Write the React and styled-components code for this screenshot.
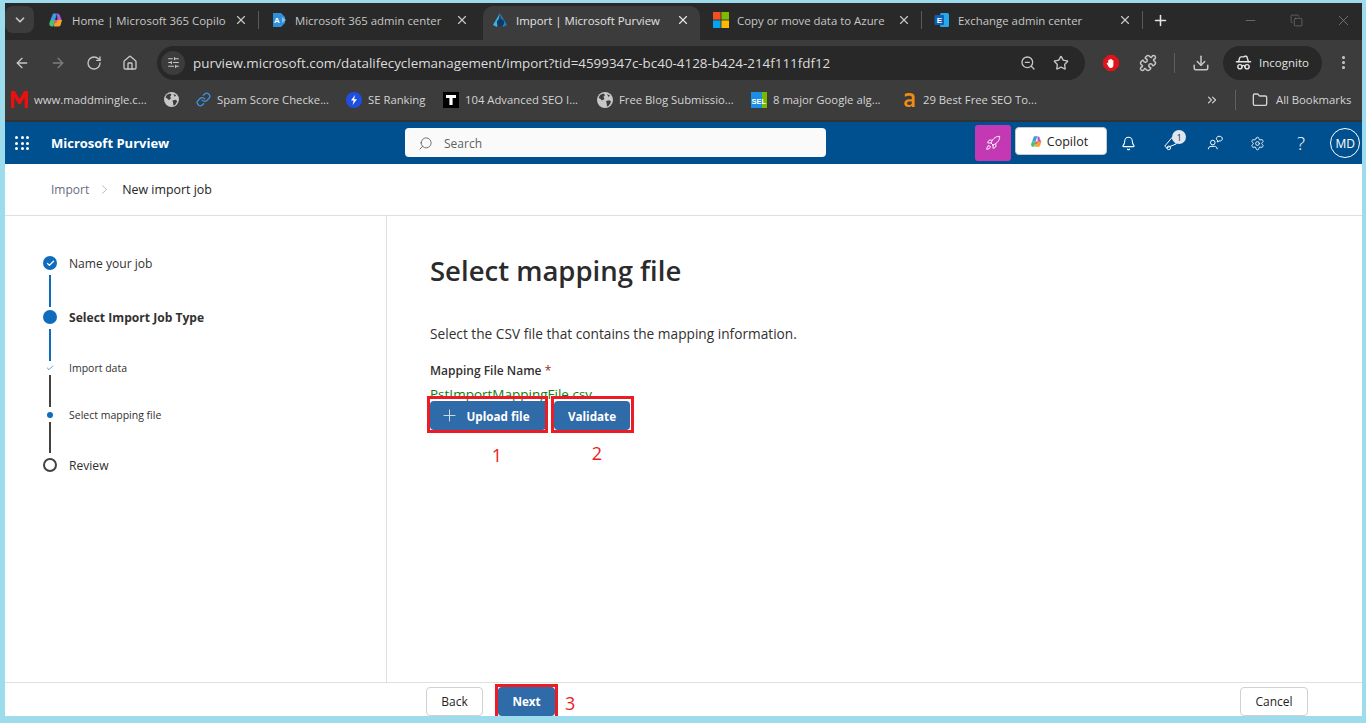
import styled, { createGlobalStyle } from 'styled-components';
import {
  ArrowLeft,
  ArrowRight,
  Bell,
  Check,
  ChevronDown,
  ChevronRight,
  ChevronsRight,
  Copy,
  Download,
  Folder,
  HatGlasses,
  House,
  Link,
  Minus,
  MoreVertical,
  Plus,
  Puzzle,
  RotateCw,
  Rocket,
  Search,
  Settings,
  SlidersHorizontal,
  Star,
  X,
  ZoomOut,
} from 'lucide-react';

const GlobalStyle = createGlobalStyle`
  html, body { margin: 0; padding: 0; }
  body { font-family: "Open Sans", "Noto Sans", "Liberation Sans", sans-serif; }
  * { box-sizing: border-box; }
`;

const Frame = styled.div`
  width: 1366px;
  height: 723px;
  overflow: hidden;
  background: #9cdcec;
  padding: 3px 4px 7px 5px;
  display: flex;
  flex-direction: column;
`;

const TabStrip = styled.div`
  height: 37px;
  flex: none;
  background: #292929;
  display: flex;
  align-items: flex-end;
  color: #c7c7c7;
  font-size: 12px;
`;

const TabMenu = styled.div`
  width: 29px;
  height: 27px;
  margin: 0 2px 7px 0;
  border-radius: 8px;
  background: #3c3c3c;
  display: flex;
  align-items: center;
  justify-content: center;
`;

const Tab = styled.div`
  width: ${(p) => (p.$active ? 217 : p.$wide ? 223 : 221)}px;
  height: 34px;
  flex: none;
  display: flex;
  align-items: center;
  margin: ${(p) => (p.$active ? '0 1px 0 3px' : '0')};
  padding: 0 ${(p) => (p.$active ? 10 : 11)}px 6px ${(p) => (p.$active ? 9 : 12)}px;
  border-radius: 10px 10px 0 0;
  background: ${(p) => (p.$active ? '#3c3c3c' : 'transparent')};
  color: ${(p) => (p.$active ? '#e3e3e3' : '#c7c7c7')};
  position: relative;
  &::after {
    content: '';
    display: ${(p) => (p.$rule ? 'block' : 'none')};
    position: absolute;
    right: 0;
    top: 5px;
    width: 1px;
    height: 18px;
    background: #5a5a5a;
  }
`;

const TabTitle = styled.span`
  flex: 1;
  min-width: 0;
  margin: 0 6px 0 8px;
  white-space: nowrap;
  font-size: 11.4px;
`;

const NewTab = styled.div`
  width: 35px;
  display: flex;
  justify-content: center;
  padding-bottom: 11px;
  color: #e3e3e3;
`;

const WindowControls = styled.div`
  margin-left: auto;
  display: flex;
  align-items: center;
  gap: 32px;
  padding: 0 10px 11px 0;
  color: #8b8b8b;
`;

const Toolbar = styled.div`
  height: 43px;
  flex: none;
  background: #3c3c3c;
  display: flex;
  align-items: center;
  color: #c7c7c7;
  padding: 2px 0 0 9px;
`;

const NavGroup = styled.div`
  display: flex;
  gap: 20px;
  align-items: center;
`;

const Omnibox = styled.div`
  width: 928px;
  height: 34px;
  margin-left: 19px;
  border-radius: 17px;
  background: #282828;
  display: flex;
  align-items: center;
  padding: 0 16px 0 4px;
`;

const TuneBadge = styled.div`
  width: 24px;
  height: 24px;
  border-radius: 50%;
  background: #3c3c3c;
  display: flex;
  align-items: center;
  justify-content: center;
`;

const Url = styled.span`
  flex: 1;
  margin-left: 8px;
  font-size: 13.4px;
  color: #dcdcdc;
  white-space: nowrap;
`;

const OmniIcons = styled.div`
  display: flex;
  gap: 17px;
  align-items: center;
`;

const ToolIcons = styled.div`
  display: flex;
  align-items: center;
  margin-left: 18px;
  gap: 20px;
`;

const Rule = styled.div`
  width: 1px;
  height: 20px;
  background: #5f5f5f;
`;

const ToolRule = styled(Rule)`
  margin: 0 -3px;
`;

const IncognitoPill = styled.div`
  width: 99px;
  height: 34px;
  margin-left: 13px;
  padding-left: 12px;
  border-radius: 17px;
  background: #282828;
  color: #e3e3e3;
  font-size: 11.5px;
  display: flex;
  align-items: center;
  gap: 7px;
`;

const MoreButton = styled.div`
  margin-left: 13px;
  display: flex;
`;

const Bookmarks = styled.div`
  height: 39px;
  flex: none;
  background: #3c3c3c;
  border-bottom: 2px solid #333;
  display: flex;
  align-items: center;
  color: #d4d4d4;
  font-size: 11.3px;
  padding: 0 8px 4px 6px;
`;

const Bookmark = styled.div`
  width: ${(p) => p.$w}px;
  flex: none;
  display: flex;
  align-items: center;
  gap: 6px;
  white-space: nowrap;
`;

const BookmarkEnd = styled.div`
  margin: 0 8px 0 auto;
  display: flex;
  align-items: center;
  gap: 16px;
`;

const Header = styled.header`
  height: 42px;
  flex: none;
  background: #00508f;
  display: flex;
  align-items: center;
  color: #fff;
  padding-left: 10px;
`;

const Waffle = styled.div`
  width: 14px;
  display: grid;
  grid-template-columns: repeat(3, 3px);
  gap: 2.5px;
  span {
    width: 3px;
    height: 3px;
    border-radius: 50%;
    background: #fff;
  }
`;

const AppName = styled.div`
  margin-left: 22px;
  width: 354px;
  font-size: 13px;
  font-weight: 700;
`;

const SearchBox = styled.div`
  width: 421px;
  height: 29px;
  margin-bottom: 1px;
  padding: 1px 0 0 13px;
  background: #fafafa;
  border-radius: 4px;
  display: flex;
  align-items: center;
  gap: 11px;
  color: #616161;
  font-size: 12px;
`;

const MirroredSearch = styled(Search)`
  transform: scaleX(-1);
`;

const RocketTile = styled.div`
  width: 36px;
  height: 36px;
  margin-left: 149px;
  border-radius: 3px;
  background: #c239b3;
  display: flex;
  align-items: center;
  justify-content: center;
`;

const CopilotButton = styled.div`
  width: 92px;
  height: 28px;
  margin: 0 0 4px 4px;
  padding-right: 4px;
  background: #fff;
  border: 1px solid #c8c8c8;
  border-radius: 4px;
  color: #242424;
  font-size: 12.5px;
  font-weight: 500;
  display: flex;
  align-items: center;
  justify-content: center;
  gap: 4px;
`;

const HeaderIcons = styled.div`
  margin-left: 13px;
  display: flex;
  align-items: center;
  gap: 27.25px;
`;

const HeaderIcon = styled.div`
  width: 16px;
  height: 16px;
  position: relative;
  display: flex;
  align-items: center;
  justify-content: center;
  font-size: 19px;
  font-weight: 300;
`;

const CountBadge = styled.span`
  position: absolute;
  top: -5px;
  right: -7px;
  width: 14px;
  height: 14px;
  border-radius: 50%;
  background: #dfe6ee;
  color: #242424;
  font-size: 8.5px;
  font-weight: 400;
  display: flex;
  align-items: center;
  justify-content: center;
`;

const Avatar = styled.div`
  width: 30px;
  height: 30px;
  margin-left: -6px;
  border-radius: 50%;
  border: 1px solid #fff;
  font-size: 12px;
  display: flex;
  align-items: center;
  justify-content: center;
`;

const Breadcrumb = styled.nav`
  height: 52px;
  flex: none;
  background: #fff;
  border-bottom: 1px solid #e0e0e0;
  display: flex;
  align-items: center;
  padding-left: 46px;
  font-size: 12.4px;
  color: #242424;
`;

const Crumb = styled.span`
  color: #6b6b80;
  font-size: 12px;
`;

const CrumbArrow = styled.span`
  display: flex;
  margin: 0 10px 0 8px;
  color: #a0a0a0;
`;

const Body = styled.main`
  flex: 1;
  min-height: 0;
  background: #fff;
  display: flex;
`;

const Sidebar = styled.aside`
  width: 382px;
  flex: none;
  border-right: 1px solid #e0e0e0;
  padding: 40px 0 0 38px;
`;

const StepRow = styled.div`
  height: 14px;
  display: flex;
  align-items: center;
  gap: 12px;
  color: #323130;
  font-size: ${(p) => (p.$small ? '10.5px' : '12.1px')};
  font-weight: ${(p) => (p.$bold ? 700 : 400)};
`;

const Marker = styled.div`
  width: 14px;
  height: 14px;
  flex: none;
  display: flex;
  align-items: center;
  justify-content: center;
`;

const FilledDot = styled.div`
  width: ${(p) => p.$size}px;
  height: ${(p) => p.$size}px;
  border-radius: 50%;
  background: #0f6cbd;
  color: #fff;
  display: flex;
  align-items: center;
  justify-content: center;
`;

const Ring = styled.div`
  width: 14px;
  height: 14px;
  border-radius: 50%;
  border: 2px solid #424242;
`;

const Connector = styled.div`
  width: 2px;
  height: ${(p) => p.$h}px;
  margin: ${(p) => p.$top}px 0 ${(p) => p.$bottom}px 6px;
  background: ${(p) => (p.$done ? '#0f6cbd' : '#424242')};
`;

const Content = styled.section`
  flex: 1;
  padding: 36px 0 0 43px;
  color: #323130;
`;

const Heading = styled.h1`
  margin: 0;
  font-size: 27.5px;
  font-weight: 600;
  line-height: 38px;
  color: #2b2b2b;
`;

const Lead = styled.p`
  margin: 35px 0 0;
  font-size: 13.7px;
  line-height: 18px;
  color: #323130;
`;

const FieldLabel = styled.div`
  margin-top: 19px;
  font-size: 12px;
  font-weight: 600;
  line-height: 18px;
  color: #323130;
  em {
    font-style: normal;
    font-weight: 400;
    color: #a4262c;
  }
`;

const FileName = styled.div`
  margin-top: 5px;
  height: 10px;
  font-size: 13.5px;
  line-height: 18px;
  color: #107c10;
`;

const ButtonRow = styled.div`
  margin-top: 6px;
  display: flex;
  gap: 8px;
  align-items: flex-start;
`;

const Action = styled.div`
  display: flex;
  flex-direction: column;
  align-items: center;
`;

// the red rectangle is an annotation drawn over the button, not part of its size
const PrimaryButton = styled.button`
  width: ${(p) => p.$w}px;
  height: 29px;
  position: relative;
  border: 0;
  border-radius: 4px;
  background: #2f6aa9;
  color: #fff;
  font: 700 11.7px "Open Sans", "Noto Sans", sans-serif;
  display: flex;
  align-items: center;
  justify-content: center;
  gap: 7px;
  padding: 0;
  &::after {
    content: '';
    position: absolute;
    inset: -5px -2px -3px -3px;
    border: 3px solid #ed1c24;
  }
`;

const UploadButton = styled(PrimaryButton)`
  padding-right: 6px;
`;

const ValidateButton = styled(PrimaryButton)`
  &::after {
    inset: -5px -4px -3px -3px;
  }
`;

const PlusIcon = styled(Plus)`
  color: #cfe0ef;
`;

const StepNumber = styled.span`
  color: #ed1c24;
  font: 400 18px "Open Sans", sans-serif;
  line-height: 20px;
  margin-top: ${(p) => p.$top}px;
  transform: translateX(${(p) => p.$nudge}px);
`;

const Footer = styled.footer`
  height: 34px;
  flex: none;
  background: #fff;
  border-top: 1px solid #e0e0e0;
  display: flex;
  align-items: flex-start;
  padding: 4px 54px 0 421px;
  overflow: hidden;
`;

const OutlineButton = styled.button`
  width: ${(p) => p.$w}px;
  height: 29px;
  border: 1px solid #d1d1d1;
  border-radius: 4px;
  background: #fff;
  color: #242424;
  font: 500 12px "Open Sans", "Noto Sans", sans-serif;
  padding: 0;
  margin-left: ${(p) => (p.$end ? 'auto' : '0')};
`;

const NextButton = styled(PrimaryButton)`
  margin-left: 15px;
  padding-bottom: 2px;
  &::after {
    inset: -3px -3px -3px -3px;
  }
`;

const NextNumber = styled.span`
  color: #ed1c24;
  font: 400 18px "Open Sans", sans-serif;
  line-height: 24px;
  margin: 4px 0 0 10px;
`;

const Copilot = ({ size = 14 }) => (
  <svg width={size} height={size} viewBox="0 0 16 16">
    <path d="M5 1.5h4L7 8H2.5z" fill="#3b9be8" />
    <path d="M9 1.5c2 0 2.7 1 3.3 3L14 9H9.5z" fill="#b45ad6" />
    <path d="M2.5 8H7l-1.2 5c-.3 1-1 1.6-2 1.6C2 14.6 1 13 1.4 11z" fill="#48c27a" />
    <path d="M7 8h7l-1.2 4.4c-.4 1.4-1.2 2.2-2.7 2.2H5.8z" fill="#f4a52c" />
    <path d="M7 8h2.5L8.6 11H6.2z" fill="#ee5a6f" />
  </svg>
);

const AdminIcon = () => (
  <svg width="16" height="16" viewBox="0 0 16 16">
    <path d="M2 1h8l4 4v6l-4 4H2z" fill="#2f8fd8" />
    <path d="M11 5l4 3-4 3z" fill="#7cc4f0" />
    <text x="3" y="11" fontSize="8" fontWeight="700" fill="#fff" fontFamily="Liberation Sans">A</text>
  </svg>
);

const PurviewIcon = () => (
  <svg width="16" height="16" viewBox="0 0 16 16">
    <path d="M8 1L1 13l4 2z" fill="#38b6e8" />
    <path d="M8 1l7 12-4 2z" fill="#1c7fd0" />
    <circle cx="8.5" cy="10.5" r="3.6" fill="#123a66" />
  </svg>
);

const MsIcon = () => (
  <svg width="16" height="16" viewBox="0 0 16 16">
    <rect x="0" y="0" width="7.6" height="7.6" fill="#f25022" />
    <rect x="8.4" y="0" width="7.6" height="7.6" fill="#7fba00" />
    <rect x="0" y="8.4" width="7.6" height="7.6" fill="#00a4ef" />
    <rect x="8.4" y="8.4" width="7.6" height="7.6" fill="#ffb900" />
  </svg>
);

const ExchangeIcon = () => (
  <svg width="16" height="16" viewBox="0 0 16 16">
    <rect x="6" y="1" width="9" height="14" rx="1.5" fill="#28a8ea" />
    <rect x="0.5" y="3" width="9.5" height="10" rx="1" fill="#0f5fb0" />
    <text x="2.8" y="11" fontSize="8" fontWeight="700" fill="#fff" fontFamily="Liberation Sans">E</text>
  </svg>
);

const StopIcon = () => (
  <svg width="16" height="16" viewBox="0 0 16 16">
    <path d="M5 0h6l5 5v6l-5 5H5l-5-5V5z" fill="#e2131a" />
    <path d="M5.2 9V5.2a.7.7 0 011.3 0V4.2a.7.7 0 011.3 0v.2a.7.7 0 011.3 0v1a.7.7 0 011.3 0V10c0 2-1 3-2.6 3-1.3 0-2-.7-2.6-2L3.8 8.6c-.4-.8.6-1.2 1.1-.6z" fill="#fff" />
  </svg>
);

const GlobeIcon = ({ size = 16 }) => (
  <svg width={size} height={size} viewBox="0 0 16 16">
    <circle cx="8" cy="8" r="8" fill="#c7c7c7" />
    <path d="M3 3l3.5-1.4L8 3 6.5 5 7.5 7 5 8.5 3 6.5 1.6 6z" fill="#3c3c3c" />
    <path d="M9 9l3.5-.8 1.6 1.6L12 13.5l-2 1-.3-3z" fill="#3c3c3c" />
    <path d="M10 2l3 1.5L11.5 5z" fill="#3c3c3c" />
  </svg>
);

const SeRankingIcon = () => (
  <svg width="16" height="16" viewBox="0 0 16 16">
    <circle cx="8" cy="8" r="8" fill="#1f4fe0" />
    <path d="M9 3L5 8.6h2.6L6.6 13 11 7.2H8.2z" fill="#fff" />
  </svg>
);

const TIcon = () => (
  <svg width="16" height="16" viewBox="0 0 16 16">
    <rect width="16" height="16" fill="#000" />
    <path d="M3 3h10v3H9.6v7H6.4V6H3z" fill="#fff" />
  </svg>
);

const SelIcon = () => (
  <svg width="16" height="16" viewBox="0 0 16 16">
    <rect width="11" height="16" fill="#1b8fe8" />
    <rect x="11" width="5" height="16" fill="#7ab800" />
    <text x="0.5" y="11.5" fontSize="7.5" fontWeight="700" fill="#fff" fontFamily="Liberation Sans">SEL</text>
  </svg>
);

const ALogo = () => (
  <svg width="16" height="16" viewBox="0 0 16 16">
    <path d="M3 1.5c1-.7 2.6-1 5-1 3.6 0 5.5 1.2 5.5 4.5V15.5h-3V14c-1 1.2-2.2 1.6-3.6 1.6C4 15.6 2.4 14 2.4 11.5 2.4 9 4.4 7.2 7.6 7.2h2.9V5.4c0-1.3-.8-2-2.6-2-1.6 0-3 .3-4.9 1zM10.5 9.6H8c-1.6 0-2.5.7-2.5 1.9s.8 1.8 2 1.8c1.5 0 3-1 3-2.2z" fill="#f28a14" fillRule="evenodd" />
  </svg>
);

const MLogo = () => (
  <svg width="17" height="17" viewBox="0 0 17 17">
    <path d="M0 17V0h4l4.5 8L13 0h4v17h-3.4V6.5L9.6 13H7.4L3.4 6.5V17z" fill="#e81010" />
  </svg>
);

const MegaphoneIcon = () => (
  <svg width="18" height="18" viewBox="0 0 18 18" fill="none" stroke="#fff" strokeWidth="1.1">
    <path d="M2 12.5L10 3l5 7-11 4.5z" />
    <circle cx="6.5" cy="14.5" r="2" />
  </svg>
);

const FeedbackIcon = () => (
  <svg width="18" height="18" viewBox="0 0 18 18" fill="none" stroke="#fff" strokeWidth="1.1">
    <circle cx="6.5" cy="8.5" r="2.6" />
    <path d="M1.5 16c0-2 1.4-3.2 3-3.2h4c1.6 0 3 1.2 3 3.2" />
    <path d="M10.5 4.2a3.4 2.8 0 116 1.8c-.7.7-2 1-3 .7l-2 1.2.4-1.8c-.9-.5-1.4-1.1-1.4-1.9z" />
  </svg>
);

const tabs = [
  { title: 'Home | Microsoft 365 Copilo', icon: <Copilot size={16} />, rule: true, wide: true },
  { title: 'Microsoft 365 admin center', icon: <AdminIcon /> },
  { title: 'Import | Microsoft Purview', icon: <PurviewIcon />, active: true },
  { title: 'Copy or move data to Azure', icon: <MsIcon />, rule: true },
  { title: 'Exchange admin center', icon: <ExchangeIcon />, rule: true },
];

const bookmarks = [
  { w: 153, label: 'www.maddmingle.c...', icon: <MLogo /> },
  { w: 32, label: '', icon: <GlobeIcon size={15} /> },
  { w: 150, label: 'Spam Score Checke...', icon: <Link size={15} color="#3d8fe0" strokeWidth={2.2} /> },
  { w: 97, label: 'SE Ranking', icon: <SeRankingIcon /> },
  { w: 154, label: '104 Advanced SEO I...', icon: <TIcon /> },
  { w: 154, label: 'Free Blog Submissio...', icon: <GlobeIcon /> },
  { w: 151, label: '8 major Google alg...', icon: <SelIcon /> },
  { w: 135, label: '29 Best Free SEO To...', icon: <ALogo /> },
];

const App = () => (
  <Frame>
    <GlobalStyle />
    <TabStrip>
      <TabMenu>
        <ChevronDown size={14} strokeWidth={3} />
      </TabMenu>
      {tabs.map((t) => (
        <Tab key={t.title} $active={t.active} $rule={t.rule} $wide={t.wide}>
          {t.icon}
          <TabTitle>{t.title}</TabTitle>
          <X size={14} />
        </Tab>
      ))}
      <NewTab>
        <Plus size={17} strokeWidth={2.2} />
      </NewTab>
      <WindowControls>
        <Minus size={15} strokeWidth={1} />
        <Copy size={13} strokeWidth={1} />
        <X size={17} strokeWidth={1} />
      </WindowControls>
    </TabStrip>

    <Toolbar>
      <NavGroup>
        <ArrowLeft size={16} />
        <ArrowRight size={16} color="#7d7d7d" />
        <RotateCw size={16} />
        <House size={16} />
      </NavGroup>
      <Omnibox>
        <TuneBadge>
          <SlidersHorizontal size={13} />
        </TuneBadge>
        <Url>purview.microsoft.com/datalifecyclemanagement/import?tid=4599347c-bc40-4128-b424-214f111fdf12</Url>
        <OmniIcons>
          <ZoomOut size={16} />
          <Star size={16} />
        </OmniIcons>
      </Omnibox>
      <ToolIcons>
        <StopIcon />
        <Puzzle size={18} />
        <ToolRule />
        <Download size={18} />
      </ToolIcons>
      <IncognitoPill>
        <HatGlasses size={17} />
        Incognito
      </IncognitoPill>
      <MoreButton>
        <MoreVertical size={17} strokeWidth={2.4} />
      </MoreButton>
    </Toolbar>

    <Bookmarks>
      {bookmarks.map((b) => (
        <Bookmark key={b.label || 'globe'} $w={b.w}>
          {b.icon}
          {b.label}
        </Bookmark>
      ))}
      <BookmarkEnd>
        <ChevronsRight size={14} />
        <Rule />
        <Folder size={16} />
      </BookmarkEnd>
      <Bookmark $w={78}>All Bookmarks</Bookmark>
    </Bookmarks>

    <Header>
      <Waffle>
        {Array.from({ length: 9 }, (_, i) => (
          <span key={i} />
        ))}
      </Waffle>
      <AppName>Microsoft Purview</AppName>
      <SearchBox>
        <MirroredSearch size={15} strokeWidth={1.4} />
        Search
      </SearchBox>
      <RocketTile>
        <Rocket size={16} strokeWidth={1.4} />
      </RocketTile>
      <CopilotButton>
        <Copilot size={13} />
        Copilot
      </CopilotButton>
      <HeaderIcons>
        <HeaderIcon>
          <Bell size={15} strokeWidth={1.7} />
        </HeaderIcon>
        <HeaderIcon>
          <MegaphoneIcon />
          <CountBadge>1</CountBadge>
        </HeaderIcon>
        <HeaderIcon>
          <FeedbackIcon />
        </HeaderIcon>
        <HeaderIcon>
          <Settings size={15} strokeWidth={1.4} />
        </HeaderIcon>
        <HeaderIcon>?</HeaderIcon>
        <Avatar>MD</Avatar>
      </HeaderIcons>
    </Header>

    <Breadcrumb>
      <Crumb>Import</Crumb>
      <CrumbArrow>
        <ChevronRight size={15} strokeWidth={1.2} />
      </CrumbArrow>
      New import job
    </Breadcrumb>

    <Body>
      <Sidebar>
        <StepRow>
          <Marker>
            <FilledDot $size={14}>
              <Check size={9} strokeWidth={3.5} />
            </FilledDot>
          </Marker>
          Name your job
        </StepRow>
        <Connector $done $h={32} $top={5} $bottom={3} />
        <StepRow $bold>
          <Marker>
            <FilledDot $size={14} />
          </Marker>
          Select Import Job Type
        </StepRow>
        <Connector $done $h={32} $top={5} $bottom={0} />
        <StepRow $small>
          <Marker>
            <Check size={8} color="#0f6cbd" />
          </Marker>
          Import data
        </StepRow>
        <Connector $h={32} $top={0} $bottom={1} />
        <StepRow $small>
          <Marker>
            <FilledDot $size={6} />
          </Marker>
          Select mapping file
        </StepRow>
        <Connector $h={31} $top={0} $bottom={5} />
        <StepRow>
          <Marker>
            <Ring />
          </Marker>
          Review
        </StepRow>
      </Sidebar>

      <Content>
        <Heading>Select mapping file</Heading>
        <Lead>Select the CSV file that contains the mapping information.</Lead>
        <FieldLabel>
          Mapping File Name <em>*</em>
        </FieldLabel>
        <FileName>PstImportMappingFile.csv</FileName>
        <ButtonRow>
          <Action>
            <UploadButton $w={116}>
              <PlusIcon size={19} strokeWidth={1.2} />
              Upload file
            </UploadButton>
            <StepNumber $nudge={9} $top={15}>1</StepNumber>
          </Action>
          <Action>
            <ValidateButton $w={76}>Validate</ValidateButton>
            <StepNumber $nudge={5} $top={13}>2</StepNumber>
          </Action>
        </ButtonRow>
      </Content>
    </Body>

    <Footer>
      <OutlineButton $w={57}>Back</OutlineButton>
      <NextButton $w={57}>Next</NextButton>
      <NextNumber>3</NextNumber>
      <OutlineButton $w={68} $end>
        Cancel
      </OutlineButton>
    </Footer>
  </Frame>
);

export default App;
